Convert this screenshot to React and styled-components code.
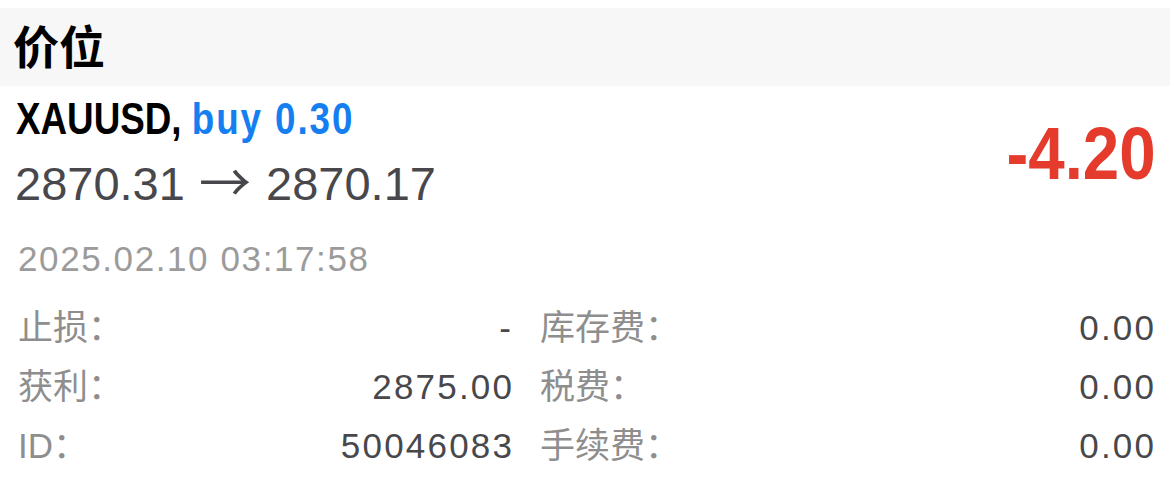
import React from "react";
import styled, { createGlobalStyle } from "styled-components";

const Global = createGlobalStyle`
  html, body { margin: 0; padding: 0; background: #ffffff; }
  body { font-family: "Liberation Sans", "Noto Sans CJK SC", sans-serif; }
`;

const Page = styled.div`
  width: 1170px;
  height: 490px;
  padding-top: 8px;
  box-sizing: border-box;
  background: #ffffff;
  overflow: hidden;
`;

const SectionHeader = styled.div`
  height: 78px;
  box-sizing: border-box;
  background: #f7f7f7;
  display: flex;
  align-items: center;
  padding: 0 0 6px 13px;
`;

const SectionTitle = styled.h2`
  margin: 0;
  font-family: "Noto Sans CJK SC", sans-serif;
  font-weight: 700;
  font-size: 46px;
  line-height: 1;
  color: #000000;
`;

const Position = styled.div`
  padding: 8px 14px 0 16px;
`;

const Summary = styled.div`
  display: flex;
  align-items: center;
  justify-content: space-between;
`;

const SummaryText = styled.div`
  display: flex;
  flex-direction: column;
  align-items: flex-start;
`;

const SymbolLine = styled.div`
  display: inline-block;
  font-weight: 700;
  font-size: 44px;
  line-height: 50px;
  color: #000000;
  white-space: nowrap;
  transform: scaleX(0.836);
  transform-origin: left center;
`;

const Side = styled.span`
  color: #157ef0;
  letter-spacing: 2.3px;
`;

const PriceLine = styled.div`
  margin-top: 13px;
  margin-left: -1px;
  font-size: 47px;
  line-height: 54px;
  color: #48484c;
  white-space: nowrap;
`;

const Arrow = styled.span`
  font-family: "Noto Sans CJK SC", sans-serif;
  font-weight: 400;
  font-size: 52px;
  line-height: 0;
  vertical-align: -2px;
  margin: 0 2px 0 1px;
`;

const Profit = styled.div`
  font-weight: 700;
  font-size: 74px;
  line-height: 1;
  color: #e43b2d;
  margin-top: 2px;
  transform: scaleX(0.885);
  transform-origin: right center;
`;

const OpenTime = styled.div`
  margin-top: 28px;
  padding-left: 2px;
  font-size: 35px;
  line-height: 40px;
  letter-spacing: 1.6px;
  color: #9b9b9b;
`;

const Details = styled.div`
  margin-top: 19px;
  padding-left: 2px;
  display: grid;
  grid-template-columns: 496px 1fr;
  column-gap: 26px;
`;

const Field = styled.div`
  display: flex;
  justify-content: space-between;
  align-items: baseline;
  font-size: 35px;
  line-height: 59px;
  white-space: nowrap;
`;

const Label = styled.span`
  color: #8e8e8e;
`;

const Value = styled.span`
  color: #48484c;
  letter-spacing: ${(p) => (p.$dash ? "0" : "2.2px")};
  margin-right: ${(p) => (p.$dash ? "3px" : "-0.2px")};
`;

const fields = [
  ["止损：", "-", "库存费：", "0.00"],
  ["获利：", "2875.00", "税费：", "0.00"],
  ["ID：", "50046083", "手续费：", "0.00"],
];

export default function App() {
  return (
    <>
      <Global />
      <Page>
        <SectionHeader>
          <SectionTitle>价位</SectionTitle>
        </SectionHeader>
        <Position>
          <Summary>
            <SummaryText>
              <SymbolLine>
                XAUUSD, <Side>buy 0.30</Side>
              </SymbolLine>
              <PriceLine>
                2870.31 <Arrow>→</Arrow> 2870.17
              </PriceLine>
            </SummaryText>
            <Profit>-4.20</Profit>
          </Summary>
          <OpenTime>2025.02.10 03:17:58</OpenTime>
          <Details>
            {fields.map(([l1, v1, l2, v2]) => (
              <React.Fragment key={l1}>
                <Field>
                  <Label>{l1}</Label>
                  <Value $dash={v1 === "-"}>{v1}</Value>
                </Field>
                <Field>
                  <Label>{l2}</Label>
                  <Value>{v2}</Value>
                </Field>
              </React.Fragment>
            ))}
          </Details>
        </Position>
      </Page>
    </>
  );
}
